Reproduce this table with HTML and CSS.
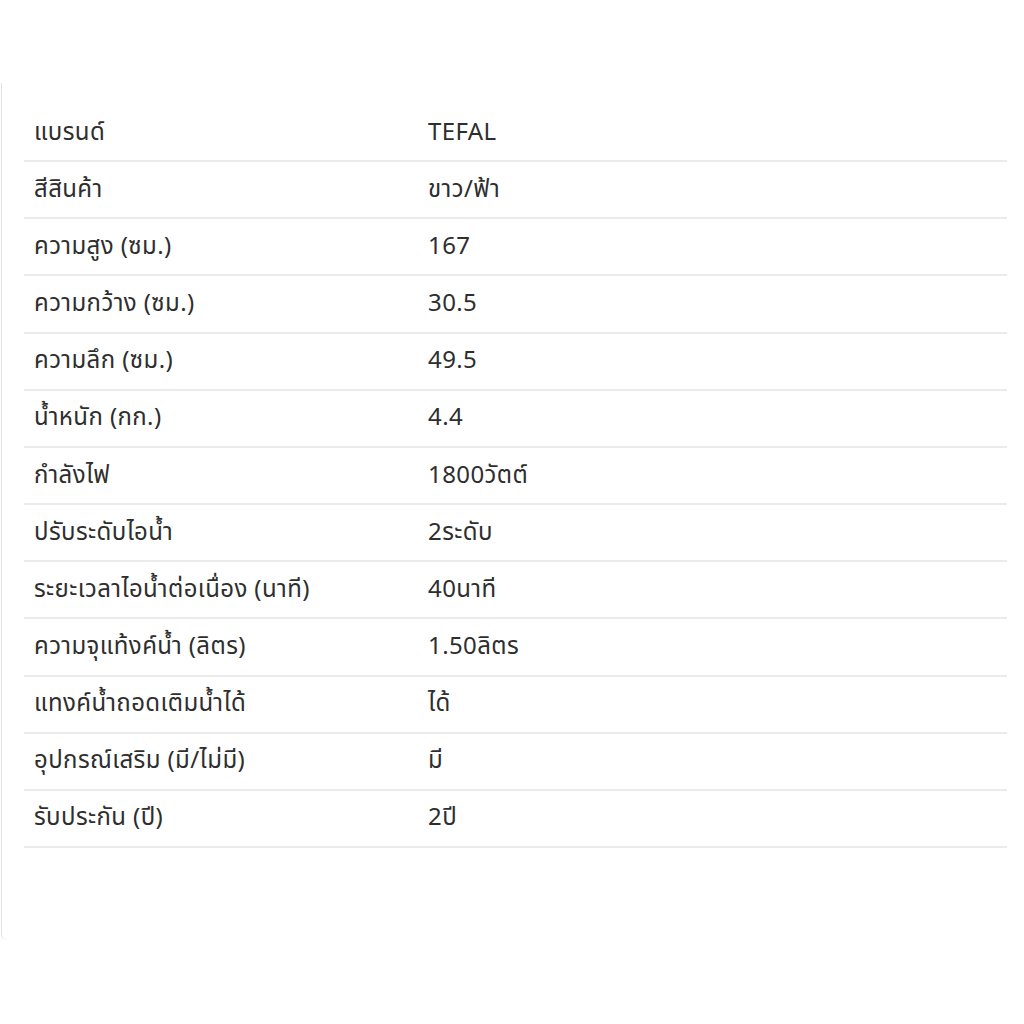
FILE: index.html
```html
<!DOCTYPE html>
<html lang="th">
<head>
<meta charset="utf-8">
<link rel="stylesheet" href="styles.css">
</head>
<body>
<div class="card">
  <div class="specs">
    <div class="row"><div class="label">แบรนด์</div><div class="value">TEFAL</div></div>
    <div class="row"><div class="label">สีสินค้า</div><div class="value">ขาว/ฟ้า</div></div>
    <div class="row"><div class="label">ความสูง (ซม.)</div><div class="value">167</div></div>
    <div class="row"><div class="label">ความกว้าง (ซม.)</div><div class="value">30.5</div></div>
    <div class="row"><div class="label">ความลึก (ซม.)</div><div class="value">49.5</div></div>
    <div class="row"><div class="label">น้ำหนัก (กก.)</div><div class="value">4.4</div></div>
    <div class="row"><div class="label">กำลังไฟ</div><div class="value">1800วัตต์</div></div>
    <div class="row"><div class="label">ปรับระดับไอน้ำ</div><div class="value">2ระดับ</div></div>
    <div class="row"><div class="label">ระยะเวลาไอน้ำต่อเนื่อง (นาที)</div><div class="value">40นาที</div></div>
    <div class="row"><div class="label">ความจุแท้งค์น้ำ (ลิตร)</div><div class="value">1.50ลิตร</div></div>
    <div class="row"><div class="label">แทงค์น้ำถอดเติมน้ำได้</div><div class="value">ได้</div></div>
    <div class="row"><div class="label">อุปกรณ์เสริม (มี/ไม่มี)</div><div class="value">มี</div></div>
    <div class="row"><div class="label">รับประกัน (ปี)</div><div class="value">2ปี</div></div>
  </div>
</div>
</body>
</html>
```
FILE: styles.css
```css
html, body {
  margin: 0;
  padding: 0;
  background: #ffffff;
}
body {
  font-family: "Noto Sans Thai", "Noto Sans", "Liberation Sans", sans-serif;
  color: #2e2e2e;
  width: 1024px;
  height: 1024px;
  overflow: hidden;
}
.card {
  margin-top: 83px;
  margin-left: 1px;
  height: 857px;
  box-sizing: border-box;
  border-left: 1px solid #e2e2e2;
  border-bottom-left-radius: 6px;
  padding: 22px 17px 0 22px;
}
.specs {
  display: flex;
  flex-direction: column;
}
.row {
  display: flex;
  align-items: center;
  height: 57.17px;
  box-sizing: border-box;
  border-bottom: 2px solid #ebebeb;
  font-size: 24px;
  letter-spacing: 0.4px;
}
.label {
  width: 404px;
  padding-left: 10px;
  box-sizing: border-box;
}
.value {
  flex: 1;
}
```
